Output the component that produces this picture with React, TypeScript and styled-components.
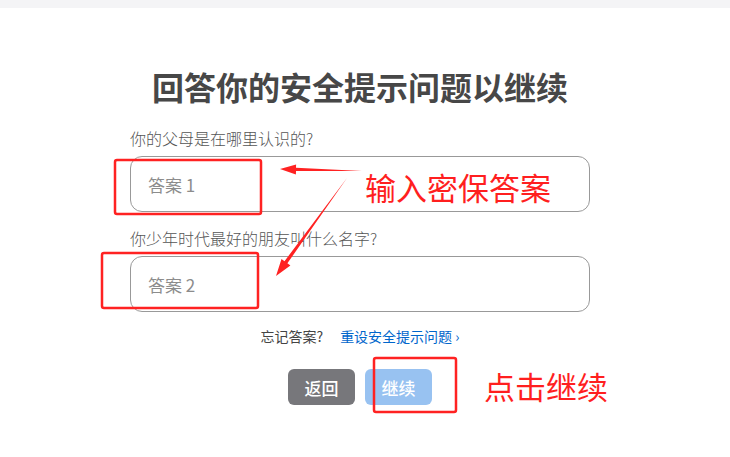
import React from "react";
import styled, { createGlobalStyle } from "styled-components";

const GlobalStyle = createGlobalStyle`
  html, body {
    margin: 0;
    padding: 0;
    background: #ffffff;
    font-family: "Noto Sans CJK SC", "Noto Sans", sans-serif;
  }
  * { box-sizing: border-box; }
`;

const Page = styled.div`
  position: relative;
  width: 730px;
  height: 457px;
  overflow: hidden;
  background: #fff;
`;

const TopBar = styled.div`
  height: 8px;
  background: #f4f4f6;
`;

const Form = styled.div`
  display: flex;
  flex-direction: column;
  width: 460px;
  margin-left: 130px;
`;

const Title = styled.h1`
  margin: 58px 0 0;
  font-size: 32px;
  line-height: 40px;
  font-weight: 700;
  color: #474747;
  text-align: center;
  letter-spacing: 0;
`;

const Label = styled.label<{ $top: number }>`
  display: block;
  margin-top: ${(p) => p.$top}px;
  font-size: 16px;
  line-height: 20px;
  font-weight: 300;
  color: #555;
`;

const Field = styled.input`
  display: block;
  width: 460px;
  height: 56px;
  margin-top: 8px;
  padding: 0 17px;
  border: 1px solid #999;
  border-radius: 12px;
  font-family: "Noto Sans CJK SC", "Noto Sans", sans-serif;
  font-size: 17px;
  font-weight: 400;
  color: #333;
  background: #fff;
  outline: none;
  &::placeholder {
    color: #8c8c8c;
  }
`;

const ForgotRow = styled.div`
  display: flex;
  justify-content: center;
  gap: 17px;
  margin-top: 14px;
  font-size: 14px;
  line-height: 20px;
  color: #444;
`;

const Link = styled.a`
  color: #0066cc;
  text-decoration: none;
`;

const ButtonRow = styled.div`
  display: flex;
  justify-content: center;
  gap: 10px;
  margin-top: 23px;
`;

const Button = styled.button<{ $variant: "gray" | "blue" }>`
  width: 67px;
  height: 36px;
  border: none;
  border-radius: 6px;
  font-family: "Noto Sans CJK SC", "Noto Sans", sans-serif;
  font-size: 17px;
  font-weight: 500;
  color: #fff;
  background: ${(p) => (p.$variant === "gray" ? "#77777b" : "#98c2f1")};
  padding: 0;
`;

const Overlay = styled.svg`
  position: absolute;
  left: 0;
  top: 0;
  pointer-events: none;
`;

const Note = styled.div<{ $x: number; $y: number }>`
  position: absolute;
  left: ${(p) => p.$x}px;
  top: ${(p) => p.$y}px;
  font-size: 31px;
  line-height: 36px;
  font-weight: 400;
  color: #ff1f1f;
  white-space: nowrap;
`;

function arrowPoints(
  tx: number,
  ty: number,
  hx: number,
  hy: number,
  headLen: number,
  headHalf: number,
  shaftHalf: number
): string {
  const dx = hx - tx;
  const dy = hy - ty;
  const len = Math.hypot(dx, dy);
  const ux = dx / len;
  const uy = dy / len;
  const nx = -uy;
  const ny = ux;
  const bx = hx - ux * headLen;
  const by = hy - uy * headLen;
  const pts: [number, number][] = [
    [tx, ty],
    [bx + nx * shaftHalf, by + ny * shaftHalf],
    [bx + nx * headHalf, by + ny * headHalf],
    [hx, hy],
    [bx - nx * headHalf, by - ny * headHalf],
    [bx - nx * shaftHalf, by - ny * shaftHalf],
  ];
  return pts.map((p) => `${p[0].toFixed(1)},${p[1].toFixed(1)}`).join(" ");
}

export default function App() {
  return (
    <>
      <GlobalStyle />
      <Page>
        <TopBar />
        <Form>
          <Title>回答你的安全提示问题以继续</Title>
          <Label $top={22}>你的父母是在哪里认识的?</Label>
          <Field placeholder="答案 1" />
          <Label $top={16}>你少年时代最好的朋友叫什么名字?</Label>
          <Field placeholder="答案 2" />
          <ForgotRow>
            <span>忘记答案?</span>
            <Link href="#">重设安全提示问题 ›</Link>
          </ForgotRow>
          <ButtonRow>
            <Button $variant="gray">返回</Button>
            <Button $variant="blue">继续</Button>
          </ButtonRow>
        </Form>

        <Overlay width={730} height={457} viewBox="0 0 730 457">
          <g fill="none" stroke="#ff2222" strokeWidth={2.5}>
            <rect x={115} y={160} width={146} height={54} rx={2} />
            <rect x={102} y={253} width={156} height={55} rx={2} />
            <rect x={374} y={358} width={82} height={54} rx={2} />
          </g>
          <g fill="#ff2222">
            <polygon points={arrowPoints(362, 171, 280, 169, 16, 5, 1.6)} />
            <polygon points={arrowPoints(347, 178, 276, 276, 17, 5.5, 1.8)} />
          </g>
        </Overlay>
        <Note $x={365} $y={169}>输入密保答案</Note>
        <Note $x={484} $y={368}>点击继续</Note>
      </Page>
    </>
  );
}
